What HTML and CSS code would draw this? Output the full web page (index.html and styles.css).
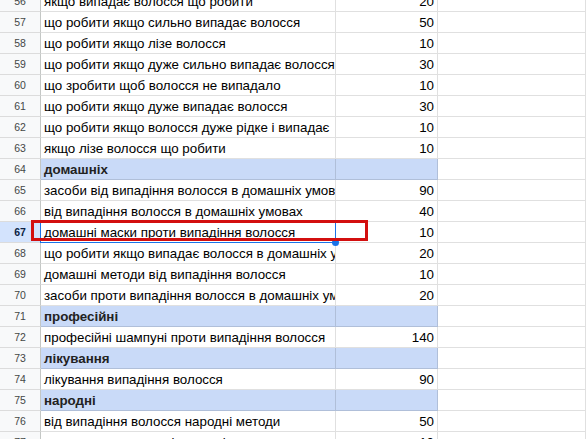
FILE: index.html
```html
<!DOCTYPE html>
<html lang="uk">
<head>
<meta charset="utf-8">
<link rel="stylesheet" href="styles.css">
</head>
<body>
<div class="sheet">
  <div class="rh">56</div><div class="c a">якщо випадає волосся що робити</div><div class="c n">20</div><div class="c e"></div>
  <div class="rh">57</div><div class="c a">що робити якщо сильно випадає волосся</div><div class="c n">50</div><div class="c e"></div>
  <div class="rh">58</div><div class="c a">що робити якщо лізе волосся</div><div class="c n">10</div><div class="c e"></div>
  <div class="rh">59</div><div class="c a">що робити якщо дуже сильно випадає волосся</div><div class="c n">30</div><div class="c e"></div>
  <div class="rh">60</div><div class="c a">що зробити щоб волосся не випадало</div><div class="c n">10</div><div class="c e"></div>
  <div class="rh">61</div><div class="c a">що робити якщо дуже випадає волосся</div><div class="c n">30</div><div class="c e"></div>
  <div class="rh">62</div><div class="c a">що робити якщо волосся дуже рідке і випадає</div><div class="c n">10</div><div class="c e"></div>
  <div class="rh">63</div><div class="c a">якщо лізе волосся що робити</div><div class="c n">10</div><div class="c e"></div>
  <div class="rh">64</div><div class="c a cat">домашніх</div><div class="c n cat"></div><div class="c e"></div>
  <div class="rh">65</div><div class="c a">засоби від випадіння волосся в домашніх умовах</div><div class="c n">90</div><div class="c e"></div>
  <div class="rh">66</div><div class="c a">від випадіння волосся в домашніх умовах</div><div class="c n">40</div><div class="c e"></div>
  <div class="rh sel">67</div><div class="c a active">домашні маски проти випадіння волосся<span class="selbox"></span><span class="handle"></span><span class="mark"></span></div><div class="c n">10</div><div class="c e"></div>
  <div class="rh">68</div><div class="c a">що робити якщо випадає волосся в домашніх умовах</div><div class="c n">20</div><div class="c e"></div>
  <div class="rh">69</div><div class="c a">домашні методи від випадіння волосся</div><div class="c n">10</div><div class="c e"></div>
  <div class="rh">70</div><div class="c a">засоби проти випадіння волосся в домашніх умовах</div><div class="c n">20</div><div class="c e"></div>
  <div class="rh">71</div><div class="c a cat">професійні</div><div class="c n cat"></div><div class="c e"></div>
  <div class="rh">72</div><div class="c a">професійні шампуні проти випадіння волосся</div><div class="c n">140</div><div class="c e"></div>
  <div class="rh">73</div><div class="c a cat">лікування</div><div class="c n cat"></div><div class="c e"></div>
  <div class="rh">74</div><div class="c a">лікування випадіння волосся</div><div class="c n">90</div><div class="c e"></div>
  <div class="rh">75</div><div class="c a cat">народні</div><div class="c n cat"></div><div class="c e"></div>
  <div class="rh">76</div><div class="c a">від випадіння волосся народні методи</div><div class="c n">50</div><div class="c e"></div>
  <div class="rh">77</div><div class="c a">маски для волосся від випадіння</div><div class="c n">10</div><div class="c e"></div>
</div>
</body>
</html>
```
FILE: styles.css
```css
html, body {
  margin: 0;
  padding: 0;
  background: #ffffff;
  overflow: hidden;
}
.sheet {
  margin-top: -9px;
  display: grid;
  grid-template-columns: 41px 295px 102px 1fr;
  grid-auto-rows: 21px;
  font-family: "Liberation Sans", Arial, sans-serif;
}
.rh {
  box-sizing: border-box;
  background: #f8f9fa;
  border-right: 1px solid #c4c7c5;
  border-bottom: 1px solid #dcdcdc;
  color: #444746;
  font-size: 10.5px;
  text-align: center;
  line-height: 21px;
}
.rh.sel {
  background: #d3e3fd;
  color: #0b1f44;
  font-weight: bold;
}
.c {
  box-sizing: border-box;
  border-right: 1px solid rgba(0, 0, 0, 0.12);
  border-bottom: 1px solid rgba(0, 0, 0, 0.12);
  font-size: 13.33px;
  color: #000;
  line-height: 20px;
  padding: 1px 3px 0 3px;
  white-space: nowrap;
  overflow: hidden;
}
.n {
  text-align: right;
}
.cat {
  background: #c9daf8;
  font-weight: bold;
  color: #222;
}
.active {
  position: relative;
  overflow: visible;
}
.active .selbox {
  position: absolute;
  left: -1px;
  top: -1px;
  width: 296px;
  height: 22px;
  box-sizing: border-box;
  border: 1px solid #1a73e8;
  pointer-events: none;
}
.active .handle {
  position: absolute;
  left: 291px;
  top: 17px;
  width: 7px;
  height: 7px;
  border-radius: 50%;
  background: #1a73e8;
}
.active .mark {
  position: absolute;
  left: -10px;
  top: -2px;
  width: 337px;
  height: 21px;
  box-sizing: border-box;
  border: 3px solid #d30f0f;
}
```
